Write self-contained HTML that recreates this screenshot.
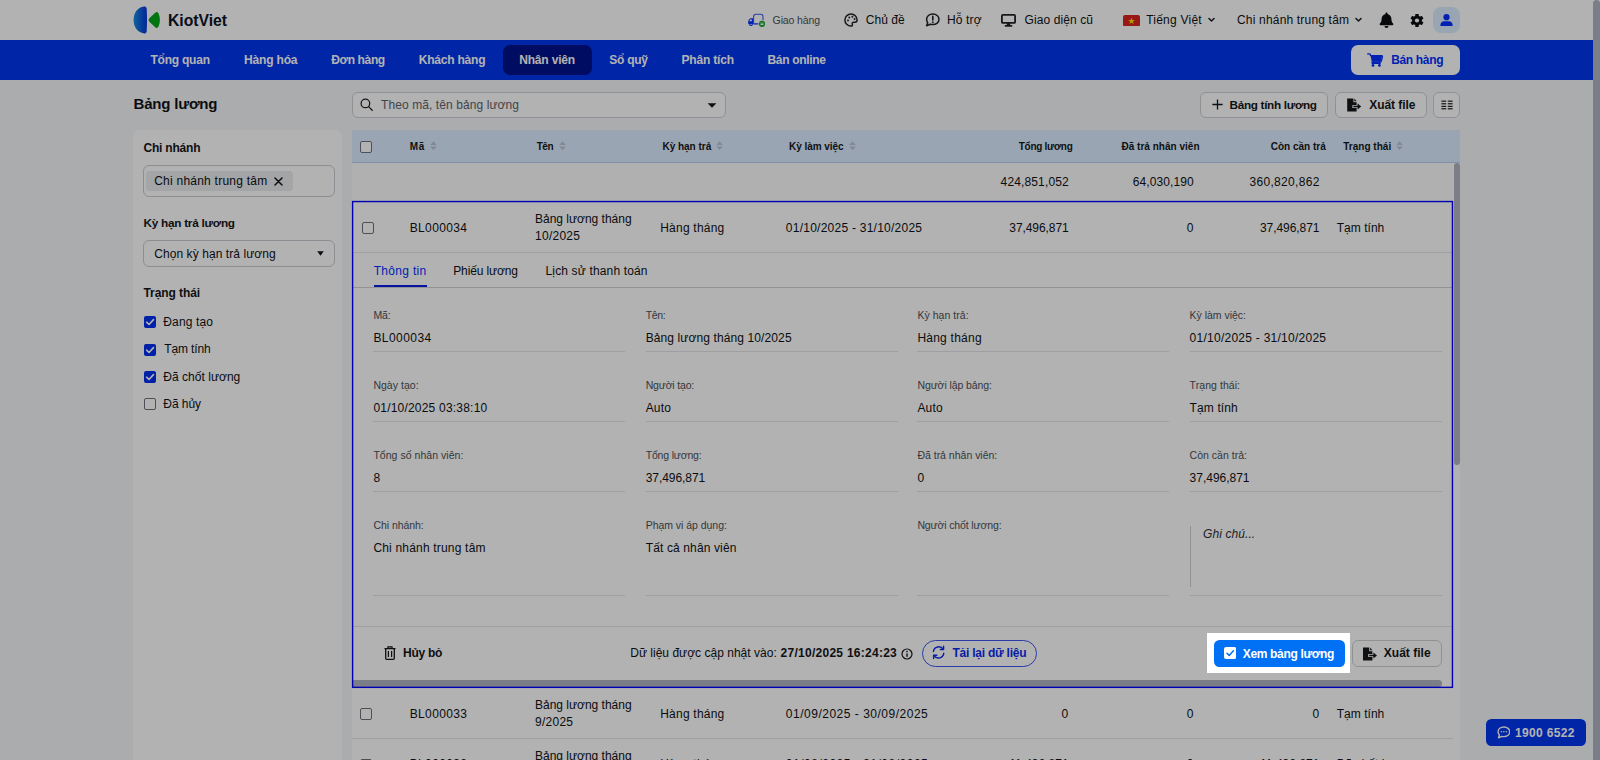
<!DOCTYPE html>
<html lang="vi">
<head>
<meta charset="utf-8">
<title>Bảng lương - KiotViet</title>
<style>
*{box-sizing:border-box;margin:0;padding:0}
html,body{width:1600px;height:760px;overflow:hidden;background:#f5f6f8}
body{font-family:"Liberation Sans",sans-serif;font-size:13px;color:#0f1216;position:relative}
.t{position:absolute;white-space:nowrap}
.b{font-weight:bold}
.i{font-style:italic}
</style>
</head>
<body>
<div style="position:absolute;left:0px;top:0px;width:1600px;height:40px;background:#fff"></div>
<svg style="position:absolute;left:133px;top:6px;" width="28" height="28" viewBox="0 0 28 28"><defs><linearGradient id="lg" x1="0" x2="1" y1="0" y2="0"><stop offset="0" stop-color="#1a8fe0"/><stop offset="1" stop-color="#0036d8"/></linearGradient></defs><path d="M11.2 0.6 C4 1.5 0.6 7.5 0.6 14 C0.6 20.5 4 26.5 11.2 27.4 C12.8 27.6 13.6 26.6 13.7 25 C14.1 18 14.1 10 13.7 3 C13.6 1.4 12.8 0.4 11.2 0.6Z" fill="url(#lg)"/><path d="M15.6 14 C15.6 13.2 16 12.6 16.6 12 L22.5 6.6 C23.6 5.6 24.8 6 25.4 7.2 C27.4 11.4 27.4 16.6 25.4 20.8 C24.8 22 23.6 22.4 22.5 21.4 L16.6 16 C16 15.4 15.6 14.8 15.6 14Z" fill="#00a818"/></svg>
<div class="t b" style="left:168px;top:10.6px;font-size:15.75px;line-height:20px;color:#0d1526;letter-spacing:-0.031px;">KiotViet</div>
<svg style="position:absolute;left:747px;top:12.5px;" width="19" height="15" viewBox="0 0 19 15"><path d="M6.6 10.8 V3.6 Q6.6 1.2 9 1.2 H13.6 Q16 1.2 16 3.6 V7.2" fill="none" stroke="#3a5cf0" stroke-width="1.1"/><path d="M6.4 10.9 H11.4" fill="none" stroke="#0030ff" stroke-width="1.2"/><path d="M6.2 5.2 H4 Q2.4 5.2 1.8 6.8 L1.2 8.6 V10.4 Q1.2 11.2 2 11.2 H6.2Z" fill="#0030ff"/><circle cx="4" cy="11.4" r="1.7" fill="#0030ff"/><circle cx="4" cy="11.4" r="0.7" fill="#fff"/><path d="M2.9 6.6 H4.8 V8.2 H2.4Z" fill="#fff"/><circle cx="15" cy="10.9" r="3.05" fill="#18a832"/><rect x="13.5" y="9.7" width="3" height="2.4" rx="0.4" fill="#fff"/><path d="M13.5 10.5 H16.5" stroke="#18a832" stroke-width="0.5"/></svg>
<div class="t" style="left:772.6px;top:11.7px;font-size:10.5px;line-height:16px;color:#4b5058;letter-spacing:-0.121px;">Giao hàng</div>
<svg style="position:absolute;left:844px;top:13px;" width="14" height="14" viewBox="0 0 14 14"><path d="M7 0.9 A6.1 6.1 0 1 0 7 13.1 C8.3 13.1 8.7 12.2 8.3 11.3 C7.8 10.2 8.5 9.2 9.7 9.2 H11 C12.3 9.2 13.1 8.3 13.1 7 A6.1 6.1 0 0 0 7 0.9Z" fill="none" stroke="#1f2328" stroke-width="1.5"/><circle cx="4" cy="7.4" r="0.95" fill="#1f2328"/><circle cx="5.3" cy="4.5" r="0.95" fill="#1f2328"/><circle cx="8.4" cy="3.8" r="0.95" fill="#1f2328"/><circle cx="10.6" cy="6" r="0.95" fill="#1f2328"/></svg>
<div class="t" style="left:865.7px;top:12px;font-size:12px;line-height:16px;letter-spacing:0.059px;">Chủ đề</div>
<svg style="position:absolute;left:924.5px;top:13px;" width="15" height="14" viewBox="0 0 15 14"><path d="M7.8 1 C11.3 1 14 3.3 14 6.3 C14 9.3 11.3 11.6 7.8 11.6 C6.9 11.6 6.1 11.5 5.3 11.2 L1.6 12.8 L2.7 9.7 C2 8.7 1.6 7.6 1.6 6.3 C1.6 3.3 4.3 1 7.8 1Z" fill="none" stroke="#1f2328" stroke-width="1.5" stroke-linejoin="round"/><path d="M7.8 3.4 V7" stroke="#1f2328" stroke-width="1.6" stroke-linecap="round"/><circle cx="7.8" cy="9.1" r="0.95" fill="#1f2328"/></svg>
<div class="t" style="left:947px;top:12px;font-size:12px;line-height:16px;letter-spacing:0.125px;">Hỗ trợ</div>
<svg style="position:absolute;left:1001px;top:13.5px;" width="15" height="13" viewBox="0 0 15 13"><rect x="0.9" y="0.9" width="13.2" height="8" rx="1" fill="none" stroke="#1f2328" stroke-width="1.8"/><path d="M6.2 9 L5.6 11.2 H9.4 L8.8 9Z" fill="#1f2328"/><rect x="3.6" y="11" width="7.8" height="1.7" rx="0.8" fill="#1f2328"/></svg>
<div class="t" style="left:1024.5px;top:12px;font-size:12px;line-height:16px;letter-spacing:0.101px;">Giao diện cũ</div>
<svg style="position:absolute;left:1122.5px;top:14.5px;" width="17" height="11.5" viewBox="0 0 17 11.5"><rect width="17" height="11.5" rx="2" fill="#da251d"/><path d="M8.5 2.6 L9.35 5 H11.9 L9.85 6.5 L10.6 8.9 L8.5 7.45 L6.4 8.9 L7.15 6.5 L5.1 5 H7.65Z" fill="#ffdf00"/></svg>
<div class="t" style="left:1146.2px;top:12px;font-size:12px;line-height:16px;letter-spacing:0.236px;">Tiếng Việt</div>
<svg style="position:absolute;left:1207.5px;top:17px;" width="7" height="6" viewBox="0 0 7 6"><path d="M1 1.5 L3.5 4 L6 1.5" fill="none" stroke="#1f2328" stroke-width="1.6" stroke-linecap="round" stroke-linejoin="round"/></svg>
<div class="t" style="left:1237px;top:12px;font-size:12px;line-height:16px;letter-spacing:0.181px;">Chi nhánh trung tâm</div>
<svg style="position:absolute;left:1354.5px;top:17px;" width="7" height="6" viewBox="0 0 7 6"><path d="M1 1.5 L3.5 4 L6 1.5" fill="none" stroke="#1f2328" stroke-width="1.6" stroke-linecap="round" stroke-linejoin="round"/></svg>
<svg style="position:absolute;left:1379px;top:12px;" width="15" height="16" viewBox="0 0 15 16"><path d="M7.5 0.4 C6.9 0.4 6.5 0.8 6.5 1.4 V1.9 C4.2 2.4 2.6 4.4 2.6 6.8 C2.6 9.4 1.9 10.6 0.9 11.6 C0.3 12.3 0.7 13.3 1.6 13.3 H13.4 C14.3 13.3 14.7 12.3 14.1 11.6 C13.1 10.6 12.4 9.4 12.4 6.8 C12.4 4.4 10.8 2.4 8.5 1.9 V1.4 C8.5 0.8 8.1 0.4 7.5 0.4Z" fill="#0b0d10"/><path d="M5.5 14 A2 2 0 0 0 9.5 14Z" fill="#0b0d10"/></svg>
<svg style="position:absolute;left:1409.5px;top:13.5px;" width="14" height="13" viewBox="-7 -6.5 14 13"><g fill="#0b0d10"><rect x="-1.7" y="-6.6" width="3.4" height="4" rx="0.6" transform="rotate(0)"/><rect x="-1.7" y="-6.6" width="3.4" height="4" rx="0.6" transform="rotate(60)"/><rect x="-1.7" y="-6.6" width="3.4" height="4" rx="0.6" transform="rotate(120)"/><rect x="-1.7" y="-6.6" width="3.4" height="4" rx="0.6" transform="rotate(180)"/><rect x="-1.7" y="-6.6" width="3.4" height="4" rx="0.6" transform="rotate(240)"/><rect x="-1.7" y="-6.6" width="3.4" height="4" rx="0.6" transform="rotate(300)"/><circle r="4.9"/></g><circle r="2.1" fill="#fff"/></svg>
<div style="position:absolute;left:1433px;top:7px;width:27px;height:26px;background:#dcecff;border-radius:8px"></div>
<svg style="position:absolute;left:1440px;top:13.6px;" width="13" height="12" viewBox="0 0 13 12"><circle cx="6.5" cy="3.2" r="3.1" fill="#0030ff"/><path d="M0.4 12 V11 C0.4 8.8 2.2 7.3 4.2 7.3 H8.8 C10.8 7.3 12.6 8.8 12.6 11 V12Z" fill="#0030ff"/></svg>
<div style="position:absolute;left:0px;top:40px;width:1600px;height:40px;background:#0036f0"></div>
<div style="position:absolute;left:502.5px;top:45px;width:89.5px;height:29.5px;background:#00128c;border-radius:7px"></div>
<div class="t b" style="left:150.5px;top:52px;font-size:12px;line-height:16px;color:#fff;letter-spacing:-0.229px;">Tổng quan</div>
<div class="t b" style="left:244px;top:52px;font-size:12px;line-height:16px;color:#fff;letter-spacing:-0.167px;">Hàng hóa</div>
<div class="t b" style="left:331.2px;top:52px;font-size:12px;line-height:16px;color:#fff;letter-spacing:-0.362px;">Đơn hàng</div>
<div class="t b" style="left:418.8px;top:52px;font-size:12px;line-height:16px;color:#fff;letter-spacing:-0.219px;">Khách hàng</div>
<div class="t b" style="left:519.2px;top:52px;font-size:12px;line-height:16px;color:#fff;letter-spacing:-0.170px;">Nhân viên</div>
<div class="t b" style="left:609.2px;top:52px;font-size:12px;line-height:16px;color:#fff;letter-spacing:-0.243px;">Sổ quỹ</div>
<div class="t b" style="left:681.5px;top:52px;font-size:12px;line-height:16px;color:#fff;letter-spacing:-0.189px;">Phân tích</div>
<div class="t b" style="left:767.5px;top:52px;font-size:12px;line-height:16px;color:#fff;letter-spacing:-0.316px;">Bán online</div>
<div style="position:absolute;left:1351px;top:45px;width:109px;height:29.5px;background:#fff;border-radius:7px"></div>
<svg style="position:absolute;left:1367px;top:52.5px;" width="16" height="14" viewBox="0 0 16 14"><path d="M0.7 0.9 H2.4 C2.9 0.9 3.2 1.2 3.3 1.6 L3.5 2.6 H14.6 C15.3 2.6 15.7 3.2 15.5 3.8 L14.3 8.2 C14.2 8.7 13.8 9 13.3 9 H5 L5.3 10.3 H13.2" fill="none" stroke="#0030ff" stroke-width="1.3" stroke-linejoin="round" stroke-linecap="round"/><path d="M3.6 3 H15 L13.7 8.6 H4.8Z" fill="#0030ff"/><circle cx="6" cy="12.4" r="1.4" fill="#0030ff"/><circle cx="12.4" cy="12.4" r="1.4" fill="#0030ff"/></svg>
<div class="t b" style="left:1391.2px;top:52.3px;font-size:12px;line-height:16px;color:#0030ff;letter-spacing:-0.339px;">Bán hàng</div>
<div class="t b" style="left:133.5px;top:93.6px;font-size:15px;line-height:20px;color:#111417;letter-spacing:-0.188px;">Bảng lương</div>
<div style="position:absolute;left:352px;top:92px;width:374px;height:26px;background:#fff;border:1px solid #cdd0d5;border-radius:6px"></div>
<svg style="position:absolute;left:360px;top:98.4px;" width="13" height="13" viewBox="0 0 13 13"><circle cx="5.4" cy="5.4" r="4.3" fill="none" stroke="#1f2328" stroke-width="1.25"/><path d="M8.6 8.6 L12.2 12.2" stroke="#1f2328" stroke-width="1.3" stroke-linecap="round"/></svg>
<div class="t" style="left:381px;top:97.4px;font-size:12px;line-height:16px;color:#5e636b;letter-spacing:0.092px;">Theo mã, tên bảng lương</div>
<svg style="position:absolute;left:706.5px;top:103px;" width="10" height="5" viewBox="0 0 10 5"><path d="M0.6 0.3 H9.4 L5 4.8Z" fill="#15171a"/></svg>
<div style="position:absolute;left:1200px;top:92px;width:128px;height:26px;background:#fff;border:1px solid #cdd0d5;border-radius:6px"></div>
<svg style="position:absolute;left:1211.5px;top:99px;" width="11" height="11" viewBox="0 0 11 11"><path d="M5.5 0.4 V10.6 M0.4 5.5 H10.6" stroke="#15171a" stroke-width="1.3"/></svg>
<div class="t b" style="left:1229.5px;top:97px;font-size:11.75px;line-height:16px;color:#15171a;letter-spacing:-0.316px;">Bảng tính lương</div>
<div style="position:absolute;left:1335px;top:92px;width:91.5px;height:26px;background:#fff;border:1px solid #cdd0d5;border-radius:6px"></div>
<svg style="position:absolute;left:1346px;top:97.5px;" width="16.4" height="14" viewBox="0 0 16 14"><path d="M1 0.6 H7.2 V4.2 H10.4 V7 H6.2 V10 H10.4 V13.4 H1Z" fill="#15171a"/><path d="M8.2 0.6 L10.4 3.2 H8.2Z" fill="#15171a"/><path d="M7.2 7.7 H11.4 V5.6 L15 8.5 L11.4 11.4 V9.3 H7.2Z" fill="#15171a"/></svg>
<div class="t b" style="left:1369.2px;top:97px;font-size:12px;line-height:16px;color:#15171a;letter-spacing:-0.048px;">Xuất file</div>
<div style="position:absolute;left:1433px;top:92px;width:27px;height:26px;background:#fff;border:1px solid #cdd0d5;border-radius:6px"></div>
<svg style="position:absolute;left:1441px;top:100px;" width="12" height="10" viewBox="0 0 12 10"><rect x="0.4" y="0.6" width="4.8" height="1.15" fill="#15171a"/><rect x="0.4" y="3.2" width="4.8" height="1.15" fill="#15171a"/><rect x="0.4" y="5.8" width="4.8" height="1.15" fill="#15171a"/><rect x="0.4" y="8.2" width="4.8" height="1.15" fill="#15171a"/><rect x="6.8" y="0.6" width="4.8" height="1.15" fill="#15171a"/><rect x="6.8" y="3.2" width="4.8" height="1.15" fill="#15171a"/><rect x="6.8" y="5.8" width="4.8" height="1.15" fill="#15171a"/><rect x="6.8" y="8.2" width="4.8" height="1.15" fill="#15171a"/></svg>
<div style="position:absolute;left:133px;top:130px;width:209px;height:640px;background:#fff;border-radius:7px"></div>
<div class="t b" style="left:143.5px;top:140px;font-size:12px;line-height:16px;color:#15171a;letter-spacing:-0.209px;">Chi nhánh</div>
<div style="position:absolute;left:143px;top:165px;width:192px;height:32px;background:#fff;border:1px solid #c8ccd3;border-radius:6px"></div>
<div style="position:absolute;left:146px;top:171px;width:146.5px;height:20px;background:#eaecef;border-radius:4px"></div>
<div class="t" style="left:154.2px;top:173px;font-size:12px;line-height:16px;letter-spacing:0.237px;">Chi nhánh trung tâm</div>
<svg style="position:absolute;left:273.5px;top:176.5px;" width="9" height="9" viewBox="0 0 9 9"><path d="M1 1 L8 8 M8 1 L1 8" stroke="#15171a" stroke-width="1.5" stroke-linecap="round"/></svg>
<div class="t b" style="left:143.5px;top:215.3px;font-size:11.75px;line-height:16px;color:#15171a;letter-spacing:-0.248px;">Kỳ hạn trả lương</div>
<div style="position:absolute;left:143px;top:240px;width:192px;height:27px;background:#fff;border:1px solid #c8ccd3;border-radius:6px"></div>
<div class="t" style="left:154.2px;top:245.5px;font-size:12px;line-height:16px;letter-spacing:0.077px;">Chọn kỳ hạn trả lương</div>
<svg style="position:absolute;left:317.3px;top:251px;" width="7" height="5" viewBox="0 0 7 5"><path d="M0.2 0.3 H6.8 L3.5 4.7Z" fill="#15171a"/></svg>
<div class="t b" style="left:143.5px;top:285px;font-size:12px;line-height:16px;color:#15171a;letter-spacing:-0.072px;">Trạng thái</div>
<div style="position:absolute;left:143.5px;top:316px;width:12px;height:12px;background:#0030f0;border-radius:2px"><svg width="12" height="12" viewBox="0 0 12 12" style="position:absolute;left:0;top:0"><path d="M2.6 6.2 L5 8.5 L9.5 3.6" fill="none" stroke="#fff" stroke-width="1.6" stroke-linecap="round" stroke-linejoin="round"/></svg></div>
<div class="t" style="left:163.3px;top:313.5px;font-size:12px;line-height:16px;letter-spacing:0.142px;">Đang tạo</div>
<div style="position:absolute;left:143.5px;top:343.5px;width:12px;height:12px;background:#0030f0;border-radius:2px"><svg width="12" height="12" viewBox="0 0 12 12" style="position:absolute;left:0;top:0"><path d="M2.6 6.2 L5 8.5 L9.5 3.6" fill="none" stroke="#fff" stroke-width="1.6" stroke-linecap="round" stroke-linejoin="round"/></svg></div>
<div class="t" style="left:164.2px;top:341px;font-size:12px;line-height:16px;letter-spacing:-0.108px;">Tạm tính</div>
<div style="position:absolute;left:143.5px;top:371px;width:12px;height:12px;background:#0030f0;border-radius:2px"><svg width="12" height="12" viewBox="0 0 12 12" style="position:absolute;left:0;top:0"><path d="M2.6 6.2 L5 8.5 L9.5 3.6" fill="none" stroke="#fff" stroke-width="1.6" stroke-linecap="round" stroke-linejoin="round"/></svg></div>
<div class="t" style="left:163.3px;top:368.5px;font-size:12px;line-height:16px;letter-spacing:0.033px;">Đã chốt lương</div>
<div style="position:absolute;left:143.5px;top:398px;width:12px;height:12px;background:#fff;border:1px solid #6e727a;border-radius:2px"></div>
<div class="t" style="left:163.3px;top:396px;font-size:12px;line-height:16px;letter-spacing:-0.066px;">Đã hủy</div>
<div style="position:absolute;left:352px;top:130px;width:1108px;height:640px;background:#fff"></div>
<div style="position:absolute;left:352px;top:130px;width:1108px;height:33px;background:#dcecff;border-bottom:1px solid #b6d0f2"></div>
<div style="position:absolute;left:360px;top:141px;width:12px;height:12px;background:#fff;border:1px solid #6e727a;border-radius:2px"></div>
<div class="t b" style="left:409.7px;top:139.5px;font-size:10px;line-height:14px;color:#15171a;letter-spacing:0.794px;">Mã</div>
<svg style="position:absolute;left:429.7px;top:140.8px;" width="7" height="9.4" viewBox="0 0 7 9.4"><path d="M0.2 3.9 L3.5 0.3 L6.8 3.9Z M0.2 5.5 L3.5 9.1 L6.8 5.5Z" fill="#bcc4d2"/></svg>
<div class="t b" style="left:536.7px;top:139.5px;font-size:10px;line-height:14px;color:#15171a;letter-spacing:-0.491px;">Tên</div>
<svg style="position:absolute;left:559.2px;top:140.8px;" width="7" height="9.4" viewBox="0 0 7 9.4"><path d="M0.2 3.9 L3.5 0.3 L6.8 3.9Z M0.2 5.5 L3.5 9.1 L6.8 5.5Z" fill="#bcc4d2"/></svg>
<div class="t b" style="left:662.5px;top:139.5px;font-size:10px;line-height:14px;color:#15171a;letter-spacing:-0.023px;">Kỳ hạn trả</div>
<svg style="position:absolute;left:716.2px;top:140.8px;" width="7" height="9.4" viewBox="0 0 7 9.4"><path d="M0.2 3.9 L3.5 0.3 L6.8 3.9Z M0.2 5.5 L3.5 9.1 L6.8 5.5Z" fill="#bcc4d2"/></svg>
<div class="t b" style="left:789px;top:139.5px;font-size:10px;line-height:14px;color:#15171a;letter-spacing:-0.035px;">Kỳ làm việc</div>
<svg style="position:absolute;left:848.7px;top:140.8px;" width="7" height="9.4" viewBox="0 0 7 9.4"><path d="M0.2 3.9 L3.5 0.3 L6.8 3.9Z M0.2 5.5 L3.5 9.1 L6.8 5.5Z" fill="#bcc4d2"/></svg>
<div class="t b" style="left:1018.8px;top:139.5px;font-size:10px;line-height:14px;color:#15171a;letter-spacing:-0.285px;">Tổng lương</div>
<div class="t b" style="left:1121.5px;top:139.5px;font-size:10px;line-height:14px;color:#15171a;letter-spacing:0.013px;">Đã trả nhân viên</div>
<div class="t b" style="left:1270.7px;top:139.5px;font-size:10px;line-height:14px;color:#15171a;">Còn cần trả</div>
<div class="t b" style="left:1343.2px;top:139.5px;font-size:10px;line-height:14px;color:#15171a;letter-spacing:0.023px;">Trạng thái</div>
<svg style="position:absolute;left:1396.2px;top:140.8px;" width="7" height="9.4" viewBox="0 0 7 9.4"><path d="M0.2 3.9 L3.5 0.3 L6.8 3.9Z M0.2 5.5 L3.5 9.1 L6.8 5.5Z" fill="#bcc4d2"/></svg>
<div style="position:absolute;left:352px;top:163px;width:1101px;height:38px;background:#fdfdfd"></div>
<div class="t" style="left:1000.6px;top:174px;font-size:12px;line-height:16px;letter-spacing:0.137px;">424,851,052</div>
<div class="t" style="left:1132.7px;top:174px;font-size:12px;line-height:16px;letter-spacing:0.104px;">64,030,190</div>
<div class="t" style="left:1249.5px;top:174px;font-size:12px;line-height:16px;letter-spacing:0.307px;">360,820,862</div>
<div style="position:absolute;left:1453.5px;top:163px;width:6.5px;height:301.5px;background:#b0b5c0;border-radius:4px 4px 4px 4px"></div>
<div style="position:absolute;left:362px;top:222px;width:12px;height:12px;background:#fff;border:1px solid #6e727a;border-radius:2px"></div>
<div class="t" style="left:409.7px;top:219.6px;font-size:12px;line-height:16px;letter-spacing:0.367px;">BL000034</div>
<div class="t" style="left:535px;top:211.4px;font-size:12px;line-height:16px;">Bảng lương tháng</div>
<div class="t" style="left:535px;top:227.5px;font-size:12px;line-height:16px;letter-spacing:0.268px;">10/2025</div>
<div class="t" style="left:660.2px;top:219.6px;font-size:12px;line-height:16px;letter-spacing:0.226px;">Hàng tháng</div>
<div class="t" style="left:785.8px;top:219.6px;font-size:12px;line-height:16px;letter-spacing:0.246px;">01/10/2025 - 31/10/2025</div>
<div class="t" style="left:1009.3px;top:219.6px;font-size:12px;line-height:16px;letter-spacing:-0.074px;">37,496,871</div>
<div class="t" style="left:1186.7px;top:219.6px;font-size:12px;line-height:16px;letter-spacing:0.312px;">0</div>
<div class="t" style="left:1260px;top:219.6px;font-size:12px;line-height:16px;letter-spacing:-0.062px;">37,496,871</div>
<div class="t" style="left:1336.7px;top:219.6px;font-size:12px;line-height:16px;letter-spacing:0.034px;">Tạm tính</div>
<div style="position:absolute;left:353px;top:252px;width:1099px;height:1px;background:#e2e4e8"></div>
<div class="t" style="left:373.7px;top:262.7px;font-size:12px;line-height:16px;color:#0030ff;letter-spacing:0.307px;">Thông tin</div>
<div class="t" style="left:453.2px;top:262.7px;font-size:12px;line-height:16px;letter-spacing:-0.115px;">Phiếu lương</div>
<div class="t" style="left:545.5px;top:262.7px;font-size:12px;line-height:16px;letter-spacing:0.151px;">Lịch sử thanh toán</div>
<div style="position:absolute;left:353px;top:287px;width:1099px;height:1px;background:#cfd2d6"></div>
<div style="position:absolute;left:373.5px;top:285px;width:53.4px;height:2px;background:#0a1ae6"></div>
<div style="position:absolute;left:373.4px;top:351px;width:252px;height:1px;background:#e2e4e8"></div>
<div style="position:absolute;left:645.7px;top:351px;width:252px;height:1px;background:#e2e4e8"></div>
<div style="position:absolute;left:917.4px;top:351px;width:252px;height:1px;background:#e2e4e8"></div>
<div style="position:absolute;left:1189.6px;top:351px;width:252px;height:1px;background:#e2e4e8"></div>
<div style="position:absolute;left:373.4px;top:421px;width:252px;height:1px;background:#e2e4e8"></div>
<div style="position:absolute;left:645.7px;top:421px;width:252px;height:1px;background:#e2e4e8"></div>
<div style="position:absolute;left:917.4px;top:421px;width:252px;height:1px;background:#e2e4e8"></div>
<div style="position:absolute;left:1189.6px;top:421px;width:252px;height:1px;background:#e2e4e8"></div>
<div style="position:absolute;left:373.4px;top:491px;width:252px;height:1px;background:#e2e4e8"></div>
<div style="position:absolute;left:645.7px;top:491px;width:252px;height:1px;background:#e2e4e8"></div>
<div style="position:absolute;left:917.4px;top:491px;width:252px;height:1px;background:#e2e4e8"></div>
<div style="position:absolute;left:1189.6px;top:491px;width:252px;height:1px;background:#e2e4e8"></div>
<div style="position:absolute;left:373.4px;top:595px;width:252px;height:1px;background:#e2e4e8"></div>
<div style="position:absolute;left:645.7px;top:595px;width:252px;height:1px;background:#e2e4e8"></div>
<div style="position:absolute;left:917.4px;top:595px;width:252px;height:1px;background:#e2e4e8"></div>
<div style="position:absolute;left:1189.6px;top:595px;width:252px;height:1px;background:#e2e4e8"></div>
<div class="t" style="left:373.4px;top:308.3px;font-size:10.5px;line-height:14px;color:#4b5058;letter-spacing:-0.058px;">Mã:</div>
<div class="t" style="left:373.4px;top:330.3px;font-size:12px;line-height:16px;letter-spacing:0.438px;">BL000034</div>
<div class="t" style="left:645.7px;top:308.3px;font-size:10.5px;line-height:14px;color:#4b5058;letter-spacing:-0.339px;">Tên:</div>
<div class="t" style="left:645.7px;top:330.3px;font-size:12px;line-height:16px;letter-spacing:0.110px;">Bảng lương tháng 10/2025</div>
<div class="t" style="left:917.4px;top:308.3px;font-size:10.5px;line-height:14px;color:#4b5058;letter-spacing:0.042px;">Kỳ hạn trả:</div>
<div class="t" style="left:917.4px;top:330.3px;font-size:12px;line-height:16px;letter-spacing:0.238px;">Hàng tháng</div>
<div class="t" style="left:1189.6px;top:308.3px;font-size:10.5px;line-height:14px;color:#4b5058;letter-spacing:-0.019px;">Kỳ làm việc:</div>
<div class="t" style="left:1189.6px;top:330.3px;font-size:12px;line-height:16px;letter-spacing:0.255px;">01/10/2025 - 31/10/2025</div>
<div class="t" style="left:373.4px;top:378.3px;font-size:10.5px;line-height:14px;color:#4b5058;letter-spacing:0.031px;">Ngày tạo:</div>
<div class="t" style="left:373.4px;top:400.3px;font-size:12px;line-height:16px;letter-spacing:0.205px;">01/10/2025 03:38:10</div>
<div class="t" style="left:645.7px;top:378.3px;font-size:10.5px;line-height:14px;color:#4b5058;letter-spacing:-0.168px;">Người tạo:</div>
<div class="t" style="left:645.7px;top:400.3px;font-size:12px;line-height:16px;letter-spacing:0.171px;">Auto</div>
<div class="t" style="left:917.4px;top:378.3px;font-size:10.5px;line-height:14px;color:#4b5058;letter-spacing:-0.085px;">Người lập bảng:</div>
<div class="t" style="left:917.4px;top:400.3px;font-size:12px;line-height:16px;letter-spacing:0.171px;">Auto</div>
<div class="t" style="left:1189.6px;top:378.3px;font-size:10.5px;line-height:14px;color:#4b5058;letter-spacing:0.059px;">Trạng thái:</div>
<div class="t" style="left:1189.6px;top:400.3px;font-size:12px;line-height:16px;letter-spacing:0.120px;">Tạm tính</div>
<div class="t" style="left:373.4px;top:448.3px;font-size:10.5px;line-height:14px;color:#4b5058;letter-spacing:0.035px;">Tổng số nhân viên:</div>
<div class="t" style="left:373.4px;top:470.3px;font-size:12px;line-height:16px;letter-spacing:0.312px;">8</div>
<div class="t" style="left:645.7px;top:448.3px;font-size:10.5px;line-height:14px;color:#4b5058;letter-spacing:-0.170px;">Tổng lương:</div>
<div class="t" style="left:645.7px;top:470.3px;font-size:12px;line-height:16px;letter-spacing:-0.062px;">37,496,871</div>
<div class="t" style="left:917.4px;top:448.3px;font-size:10.5px;line-height:14px;color:#4b5058;letter-spacing:-0.004px;">Đã trả nhân viên:</div>
<div class="t" style="left:917.4px;top:470.3px;font-size:12px;line-height:16px;letter-spacing:0.312px;">0</div>
<div class="t" style="left:1189.6px;top:448.3px;font-size:10.5px;line-height:14px;color:#4b5058;letter-spacing:0.018px;">Còn cần trả:</div>
<div class="t" style="left:1189.6px;top:470.3px;font-size:12px;line-height:16px;letter-spacing:-0.018px;">37,496,871</div>
<div class="t" style="left:373.4px;top:518.3px;font-size:10.5px;line-height:14px;color:#4b5058;letter-spacing:-0.044px;">Chi nhánh:</div>
<div class="t" style="left:373.4px;top:540.3px;font-size:12px;line-height:16px;letter-spacing:0.187px;">Chi nhánh trung tâm</div>
<div class="t" style="left:645.7px;top:518.3px;font-size:10.5px;line-height:14px;color:#4b5058;letter-spacing:-0.035px;">Phạm vi áp dụng:</div>
<div class="t" style="left:645.7px;top:540.3px;font-size:12px;line-height:16px;letter-spacing:0.131px;">Tất cả nhân viên</div>
<div class="t" style="left:917.4px;top:518.3px;font-size:10.5px;line-height:14px;color:#4b5058;letter-spacing:-0.125px;">Người chốt lương:</div>
<div style="position:absolute;left:1190px;top:526px;width:1px;height:61px;background:#cfd2d6"></div>
<div class="t i" style="left:1203px;top:525.6px;font-size:12px;line-height:16px;color:#2b2f35;letter-spacing:0.093px;">Ghi chú...</div>
<div style="position:absolute;left:353px;top:626px;width:1099px;height:1px;background:#e2e4e8"></div>
<svg style="position:absolute;left:384px;top:646px;" width="12" height="14" viewBox="0 0 12 14"><path d="M0.5 2.6 H11.5 M4 2.4 V0.8 H8 V2.4" fill="none" stroke="#15171a" stroke-width="1.3"/><path d="M1.7 2.8 V12.2 Q1.7 13.3 2.8 13.3 H9.2 Q10.3 13.3 10.3 12.2 V2.8" fill="none" stroke="#15171a" stroke-width="1.3"/><path d="M4.4 5 V11 M7.6 5 V11" stroke="#15171a" stroke-width="1.2"/></svg>
<div class="t b" style="left:403px;top:645px;font-size:12px;line-height:16px;color:#15171a;letter-spacing:-0.254px;">Hủy bỏ</div>
<div class="t" style="left:630.2px;top:645px;font-size:12px;line-height:16px;letter-spacing:0.023px;">Dữ liệu được cập nhật vào:</div>
<div class="t b" style="left:780.6px;top:645px;font-size:12px;line-height:16px;color:#15171a;letter-spacing:0.265px;">27/10/2025 16:24:23</div>
<svg style="position:absolute;left:901px;top:647.5px;" width="12" height="12" viewBox="0 0 12 12"><circle cx="6" cy="6" r="5" fill="none" stroke="#15171a" stroke-width="1.2"/><path d="M6 5.4 V8.8" stroke="#15171a" stroke-width="1.4"/><circle cx="6" cy="3.5" r="0.85" fill="#15171a"/></svg>
<div style="position:absolute;left:921.5px;top:640px;width:115.5px;height:27px;border:1px solid rgba(10,44,240,.8);border-radius:14px"></div>
<svg style="position:absolute;left:931.2px;top:645.2px;" width="15.2" height="14.8" viewBox="0 0 16 16"><path d="M2.4 7 A5.8 5.8 0 0 1 13 4.6 M13.6 9 A5.8 5.8 0 0 1 3 11.4" fill="none" stroke="#0a2cf0" stroke-width="1.5" stroke-linecap="round"/><path d="M13.4 1.4 V4.9 H9.9 M2.6 14.6 V11.1 H6.1" fill="none" stroke="#0a2cf0" stroke-width="1.5" stroke-linecap="round" stroke-linejoin="round"/></svg>
<div class="t b" style="left:952.5px;top:645.3px;font-size:12px;line-height:16px;color:#0a2cf0;letter-spacing:-0.241px;">Tải lại dữ liệu</div>
<div style="position:absolute;left:1207px;top:633px;width:143px;height:40px;background:#fff"></div>
<div style="position:absolute;left:1213.5px;top:640px;width:131.5px;height:26.5px;background:#0070f4;border-radius:5.5px"></div>
<svg style="position:absolute;left:1223.7px;top:646.7px;" width="12.3" height="12" viewBox="0 0 12.3 12"><rect width="12.3" height="12" rx="2" fill="#fff"/><path d="M3 6.2 L5.2 8.4 L9.4 3.8" fill="none" stroke="#0070f4" stroke-width="1.5" stroke-linecap="round" stroke-linejoin="round"/></svg>
<div class="t b" style="left:1242.8px;top:645.6px;font-size:12px;line-height:16px;color:#fff;letter-spacing:-0.339px;">Xem bảng lương</div>
<div style="position:absolute;left:1352px;top:640px;width:89.7px;height:27px;background:#fff;border:1px solid #cdd0d5;border-radius:6px"></div>
<svg style="position:absolute;left:1362px;top:646.5px;" width="16" height="14" viewBox="0 0 16 14"><path d="M1 0.6 H7.2 V4.2 H10.4 V7 H6.2 V10 H10.4 V13.4 H1Z" fill="#15171a"/><path d="M8.2 0.6 L10.4 3.2 H8.2Z" fill="#15171a"/><path d="M7.2 7.7 H11.4 V5.6 L15 8.5 L11.4 11.4 V9.3 H7.2Z" fill="#15171a"/></svg>
<div class="t b" style="left:1383.8px;top:645px;font-size:12px;line-height:16px;color:#15171a;letter-spacing:0.014px;">Xuất file</div>
<div style="position:absolute;left:353px;top:680px;width:1088.6px;height:6.7px;background:#b0b5c0;border-radius:0 3.5px 3.5px 0"></div>
<svg style="position:absolute;left:351px;top:200px;pointer-events:none" width="1104" height="490" viewBox="351 200 1104 490"><rect x="352.6" y="201.55" width="1099.85" height="485.8" fill="none" stroke="#0000ff" stroke-width="1.4"/></svg>
<div style="position:absolute;left:360px;top:707.5px;width:12px;height:12px;background:#fff;border:1px solid #6e727a;border-radius:2px"></div>
<div class="t" style="left:409.7px;top:705.6px;font-size:12px;line-height:16px;letter-spacing:0.367px;">BL000033</div>
<div class="t" style="left:535px;top:697.3px;font-size:12px;line-height:16px;">Bảng lương tháng</div>
<div class="t" style="left:535px;top:713.7px;font-size:12px;line-height:16px;letter-spacing:0.259px;">9/2025</div>
<div class="t" style="left:660.2px;top:705.6px;font-size:12px;line-height:16px;letter-spacing:0.226px;">Hàng tháng</div>
<div class="t" style="left:785.8px;top:705.6px;font-size:12px;line-height:16px;letter-spacing:0.510px;">01/09/2025 - 30/09/2025</div>
<div class="t" style="left:1061.5px;top:705.6px;font-size:12px;line-height:16px;letter-spacing:0.312px;">0</div>
<div class="t" style="left:1186.7px;top:705.6px;font-size:12px;line-height:16px;letter-spacing:0.312px;">0</div>
<div class="t" style="left:1312.5px;top:705.6px;font-size:12px;line-height:16px;letter-spacing:0.312px;">0</div>
<div class="t" style="left:1336.7px;top:705.6px;font-size:12px;line-height:16px;letter-spacing:0.034px;">Tạm tính</div>
<div style="position:absolute;left:352px;top:738px;width:1101px;height:1px;background:#e2e4e8"></div>
<div style="position:absolute;left:360px;top:758.6px;width:12px;height:12px;background:#fff;border:1px solid #6e727a;border-radius:2px"></div>
<div class="t" style="left:409.7px;top:756.3px;font-size:12px;line-height:16px;letter-spacing:0.367px;">BL000032</div>
<div class="t" style="left:535px;top:747.5px;font-size:12px;line-height:16px;">Bảng lương tháng</div>
<div class="t" style="left:660.2px;top:756.3px;font-size:12px;line-height:16px;letter-spacing:0.226px;">Hàng tháng</div>
<div class="t" style="left:785.8px;top:756.3px;font-size:12px;line-height:16px;letter-spacing:0.510px;">01/08/2025 - 31/08/2025</div>
<div class="t" style="left:1009.3px;top:756.3px;font-size:12px;line-height:16px;letter-spacing:0.025px;">11,496,871</div>
<div class="t" style="left:1186.7px;top:756.3px;font-size:12px;line-height:16px;letter-spacing:0.312px;">0</div>
<div class="t" style="left:1260px;top:756.3px;font-size:12px;line-height:16px;letter-spacing:0.036px;">11,496,871</div>
<div class="t" style="left:1336.7px;top:756.3px;font-size:12px;line-height:16px;letter-spacing:0.033px;">Đã chốt lương</div>
<div style="position:absolute;left:1486px;top:719px;width:99.8px;height:26.7px;background:#0036f0;border-radius:5.5px"></div>
<svg style="position:absolute;left:1496.5px;top:726px;" width="13.5" height="13" viewBox="0 0 13.5 13"><path d="M6.9 1 C10.2 1 12.7 3.1 12.7 5.8 C12.7 8.5 10.2 10.6 6.9 10.6 C6.2 10.6 5.5 10.5 4.9 10.3 L1.5 11.8 L2.4 9 C1.6 8.1 1.1 7 1.1 5.8 C1.1 3.1 3.6 1 6.9 1Z" fill="none" stroke="#fff" stroke-width="1.4" stroke-linejoin="round"/><circle cx="4.4" cy="5.8" r="0.8" fill="#fff"/><circle cx="6.9" cy="5.8" r="0.8" fill="#fff"/><circle cx="9.4" cy="5.8" r="0.8" fill="#fff"/></svg>
<div class="t b" style="left:1515px;top:724.5px;font-size:12px;line-height:16px;color:#fff;letter-spacing:0.346px;">1900 6522</div>
<div style="position:absolute;left:1207px;top:633px;width:143px;height:40px;box-shadow:0 0 0 3000px rgba(0,0,0,.3);pointer-events:none"></div>
<div style="position:absolute;left:1593px;top:0px;width:7px;height:760px;background:#7b7e88;border-radius:4px 4px 0 0"></div>
</body>
</html>
